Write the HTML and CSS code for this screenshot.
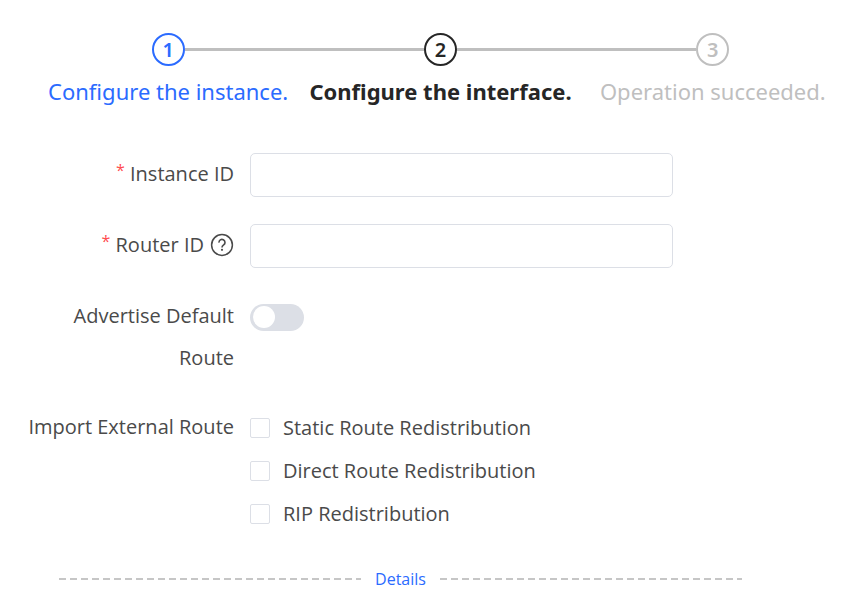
FILE: index.html
```html
<!DOCTYPE html>
<html lang="en">
<head>
    <meta charset="UTF-8">
    <meta name="viewport" content="width=device-width, initial-scale=1.0">
    <title>Configure the interface</title>
    <link rel="stylesheet" href="styles.css">
</head>
<body>
    <ol class="steps">
        <li class="step step_done">
            <span class="step_num">1</span>
            <span class="step_title">Configure the instance.</span>
        </li>
        <li class="step step_active">
            <span class="step_num">2</span>
            <span class="step_title">Configure the interface.</span>
        </li>
        <li class="step">
            <span class="step_num">3</span>
            <span class="step_title">Operation succeeded.</span>
        </li>
    </ol>

    <form class="form">
        <div class="form_row">
            <label class="form_label" for="instance-id"><span class="required">*</span> Instance ID</label>
            <input class="form_input" type="text" id="instance-id" required>
        </div>

        <div class="form_row">
            <label class="form_label form_label_help" for="router-id">
                <span><span class="required">*</span> Router ID</span>
                <svg class="help_icon" viewBox="0 0 24 24" fill="none" stroke="currentColor">
                    <circle cx="12" cy="12" r="10.4" stroke-width="1.5"/>
                    <path d="M9 9.6a3 3 0 1 1 4.7 2.3c-1.1.8-1.7 1.2-1.7 2.5" stroke-width="1.6"/>
                    <circle cx="12" cy="16.8" r="1.1" fill="currentColor" stroke="none"/>
                </svg>
            </label>
            <input class="form_input" type="text" id="router-id" required>
        </div>

        <div class="form_row">
            <label class="form_label" for="default-route">Advertise Default Route</label>
            <div class="form_switch">
                <input class="switch" type="checkbox" role="switch" id="default-route">
            </div>
        </div>

        <div class="form_row" role="group" aria-labelledby="import-label">
            <span class="form_label" id="import-label">Import External Route</span>
            <div class="check_list">
                <label class="check"><input class="check_box" type="checkbox"> Static Route Redistribution</label>
                <label class="check"><input class="check_box" type="checkbox"> Direct Route Redistribution</label>
                <label class="check"><input class="check_box" type="checkbox"> RIP Redistribution</label>
            </div>
        </div>
    </form>

    <div class="divider">
        <a class="divider_link" href="#">Details</a>
    </div>
</body>
</html>
```
FILE: styles.css
```css
* {
    margin: 0;
    padding: 0;
    box-sizing: border-box;
}

body {
    font-family: 'Segoe UI', 'Open Sans', 'Noto Sans', sans-serif;
    font-size: 20px;
    line-height: 44px;
    background: #fff;
    color: #4a4a4a;
}

/* steps */
.steps {
    display: flex;
    list-style: none;
    padding: 33px 14px 0 32px;
    font-family: 'Segoe UI', 'Noto Sans', sans-serif;
}

.step {
    flex: 1 1 0;
    display: grid;
    grid-template-columns: 1fr auto 1fr;
    align-items: center;
    color: #bfbfbf;
}

.step::before,
.step::after {
    content: "";
    height: 3px;
    background: #bfbfbf;
}

.step:first-child::before,
.step:last-child::after {
    background: none;
}

.step::before,
.step::after,
.step_num {
    grid-row: 1;
}

.step_num {
    grid-column: 2;
    width: 33px;
    height: 33px;
    border: 2px solid;
    border-radius: 50%;
    font-weight: 600;
    line-height: 29px;
    text-align: center;
}

.step_title {
    grid-row: 2;
    grid-column: 1 / -1;
    justify-self: center;
    margin-top: 9px;
    font-size: 22px;
    line-height: 32px;
    white-space: nowrap;
}

.step_done {
    color: #2b6bff;
}

.step_active {
    color: #262626;
}

.step_active .step_title {
    font-weight: 700;
}

/* form */
.form {
    display: grid;
    gap: 27px;
    padding: 46px 16px 0 16px;
}

.form_row {
    display: grid;
    grid-template-columns: 218px minmax(0, 423px);
    gap: 16px;
    align-items: start;
}

.form_label {
    text-align: right;
    line-height: 42px;
}

.form_label_help {
    display: flex;
    justify-content: flex-end;
    align-items: center;
    gap: 6px;
}

.required {
    font-size: 16px;
    line-height: 20px;
    vertical-align: text-top;
    color: #ff4d4f;
}

.help_icon {
    width: 24px;
    height: 24px;
}

.form_input {
    width: 100%;
    height: 44px;
    padding: 0 16px;
    border: 1px solid #dcdfe6;
    border-radius: 5px;
    font: inherit;
    color: inherit;
}

.form_input:focus {
    outline: none;
    border-color: #2b6bff;
}

.form_switch {
    display: flex;
    align-items: center;
    height: 44px;
}

.switch {
    appearance: none;
    display: flex;
    align-items: center;
    width: 54px;
    height: 27px;
    padding: 0 3px;
    border-radius: 14px;
    background: #dcdfe6;
}

.switch::before {
    content: "";
    width: 22px;
    height: 22px;
    border-radius: 50%;
    background: #fff;
}

.switch:checked {
    justify-content: flex-end;
    background: #2b6bff;
}

.check_list {
    display: grid;
}

.check {
    display: flex;
    align-items: center;
    gap: 13px;
    line-height: 43px;
}

.check_box {
    appearance: none;
    width: 20px;
    height: 20px;
    border: 1px solid #dcdfe6;
    border-radius: 2px;
}

.check_box:checked {
    border-color: #2b6bff;
    background: #2b6bff;
}

/* details divider */
.divider {
    display: flex;
    align-items: center;
    gap: 14px;
    margin: 32px 121px 0 59px;
}

.divider::before,
.divider::after {
    content: "";
    flex: 1;
    height: 2px;
    background: repeating-linear-gradient(to right, #c6c6c6 0 7px, transparent 7px 11px);
}

.divider_link {
    font-size: 16px;
    line-height: 24px;
    color: #2b6bff;
    text-decoration: none;
}
```
